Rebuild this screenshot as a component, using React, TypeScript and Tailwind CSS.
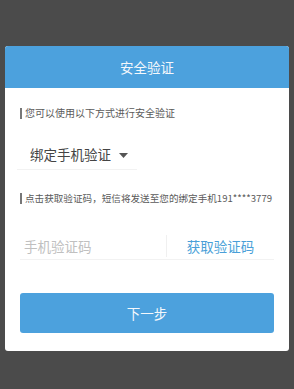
import { useState } from 'react'

export default function App() {
  const [code, setCode] = useState('')

  return (
    <main className="min-h-[389px] bg-[#4b4b4b] px-[5px] pt-[46px] font-['Noto_Sans_CJK_SC','Noto_Sans',sans-serif]">
      <div className="bg-white rounded-[3px] overflow-hidden h-[305px]">
        <div className="h-[42px] bg-[#4ca1dd] flex items-center justify-center text-[13.5px] text-[#f4f8fc]">
          安全验证
        </div>

        <div className="px-[15px]">
          <p className="mt-[18px] flex items-center text-[10px] leading-[14px] text-[#5a5a5a]">
            <span className="w-[2px] h-[11px] bg-[#777] mr-[3px]" />
            您可以使用以下方式进行安全验证
          </p>

          <button className="-ml-[3px] mt-[20px] w-[120px] h-[30px] pl-[13px] flex items-center gap-[8px] border-b border-[#f2f2f2] text-[13.5px] text-[#444]">
            绑定手机验证
            <svg width="9" height="5" viewBox="0 0 9 5" className="mt-[1px]">
              <path d="M0 0h9L4.5 5z" fill="#555" />
            </svg>
          </button>

          <p className="mt-[21px] flex items-center text-[9.6px] leading-[14px] text-[#5a5a5a] whitespace-nowrap">
            <span className="w-[2px] h-[11px] bg-[#777] mr-[3px]" />
            点击获取验证码，短信将发送至您的绑定手机191****3779
          </p>

          <div className="mt-[28px] h-[27px] flex items-center border-b border-[#f2f2f2]">
            <input
              value={code}
              onChange={(e) => setCode(e.target.value)}
              placeholder="手机验证码"
              className="w-[147px] pl-[4px] text-[13.5px] text-[#333] placeholder:text-[#c0c0c0] outline-none border-r border-[#f0f0f0] h-[22px]"
            />
            <button className="flex-1 text-center text-[13.5px] text-[#4a9fd8]">获取验证码</button>
          </div>

          <button className="mt-[33px] w-full h-[40px] rounded-[3px] bg-[#4ca1dd] text-[13.5px] text-[#f4f8fc]">
            下一步
          </button>
        </div>
      </div>
    </main>
  )
}
